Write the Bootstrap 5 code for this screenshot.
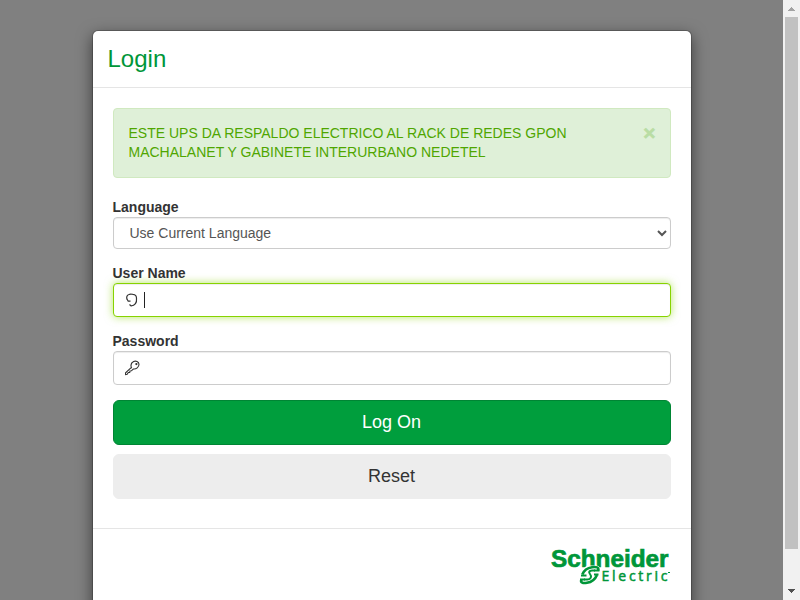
<!DOCTYPE html>
<html lang="en">
<head>
<meta charset="utf-8">
<meta name="viewport" content="width=device-width, initial-scale=1">
<title>Login</title>
<link href="https://cdn.jsdelivr.net/npm/bootstrap@5.3.0/dist/css/bootstrap.min.css" rel="stylesheet">
<style>
body{font-family:"Liberation Sans",Arial,sans-serif;font-size:14px;line-height:20px;color:#333;background:#808080}
.login-dialog{width:600px;height:650px;margin-top:30px;border:1px solid rgba(0,0,0,.2);border-radius:6px;box-shadow:0 5px 15px rgba(0,0,0,.5);background-clip:padding-box}
.login-head{height:57px;padding:11px 15px 0;border-bottom:1px solid #e5e5e5}
.login-head h1{font-size:24px;line-height:34px;color:#009639}
.login-body{padding:20px 20px 29px}
.notice{height:70px;padding:15px;margin-bottom:19px;color:#4fa600;background:#dff0d8;border:1px solid #d0e9c0;border-radius:4px;line-height:19px}
.notice p{width:460px}
.dismiss{width:14px;height:17px;margin-right:-2px;color:#b9dda4;-webkit-text-stroke:.6px #b9dda4;border:0;background:none;padding:0;font-size:21px;font-weight:700;line-height:16px}
.login-body label{font-weight:700;line-height:20px;height:20px}
.login-body .field{height:34px;font-size:14px;line-height:20px;padding:6px 12px;color:#555;border:1px solid #ccc;border-radius:4px;box-shadow:inset 0 1px 1px rgba(0,0,0,.075);background:#fff}
.login-body select.field{height:32px;appearance:auto;padding:5px 12px}
.login-body div.field{padding-left:11px}
.login-body .field.active-field{border-color:#87d300;box-shadow:inset 0 1px 1px rgba(0,0,0,.075),0 0 8px rgba(135,211,0,.6)}
.login-body .user-label,.login-body .pass-label{margin-top:14px}
.caret{width:1px;height:16px;background:#222;margin-left:5px}
.login-body .btn{height:45px;padding:0;font-size:18px;line-height:41px;border-radius:6px}
.login-body .btn-logon{margin-top:15px}
.login-body .btn-clear{margin-top:9px}
.btn-logon,.btn-logon:hover{color:#fff;background:#009e3d;border-color:#008534}
.btn-clear,.btn-clear:hover{color:#333;background:#ededed;border-color:#ededed}
.login-foot{border-top:1px solid #e5e5e5;padding:15px 20px}
.scroll-track{width:17px;background:#f1f1f1}
.scroll-thumb{width:13px;height:532px;background:#c1c1c1}
</style>
</head>
<body>
<div class="d-flex vh-100 overflow-hidden">
  <main class="flex-grow-1 d-flex justify-content-center align-items-start overflow-hidden">
    <section class="login-dialog bg-white flex-shrink-0">
      <header class="login-head"><h1 class="m-0 fw-normal">Login</h1></header>
      <form class="login-body">
        <div class="notice d-flex justify-content-between" role="alert">
          <p class="m-0">ESTE UPS DA RESPALDO ELECTRICO AL RACK DE REDES GPON MACHALANET Y GABINETE INTERURBANO NEDETEL</p>
          <button type="button" class="dismiss" aria-label="Close">×</button>
        </div>
        <label class="d-block" for="lang">Language</label>
        <select id="lang" class="form-control field"><option>Use Current Language</option></select>
        <label class="d-block user-label">User Name</label>
        <div class="form-control field active-field d-flex align-items-center" role="textbox">
          <svg width="14" height="16" viewBox="0 0 14 16" fill="none" stroke="#333" stroke-width="1.2"><path d="M2 7.500C1.200 5.200 2 2.800 4 2.500C5.500 1.600 7 2.300 8 2.400C10.500 2.400 11.600 4.400 11.500 6.500C12 10.500 10 13.800 6 14M2 7L3.200 9.200H5.500M4.500 12.500L6.500 14.200"/></svg>
          <span class="caret"></span>
        </div>
        <label class="d-block pass-label">Password</label>
        <div class="form-control field d-flex align-items-center" role="textbox">
          <svg width="15" height="16" viewBox="0.500 0 15 16" fill="none" stroke="#333" stroke-width="1.1"><path d="M7.2 8.2C6 5.7 6.7 2.900 9.100 1.600C11.200.5 14.400 1.700 14.500 4.200C14.600 7.300 11.600 9.400 8.800 9L6.900 10.800L5.500 10.900L5.200 12.400L3.800 12.500L2.700 14.200L1 14.500L1.100 12.800L7.200 7.200"/><circle cx="11.900" cy="4.100" r=".6"/></svg>
        </div>
        <button type="button" class="btn btn-logon w-100 d-block">Log On</button>
        <button type="button" class="btn btn-clear w-100 d-block">Reset</button>
      </form>
      <footer class="login-foot d-flex justify-content-end">
        <svg width="120" height="42" viewBox="0 0 120 42" fill="#009639" role="img" aria-label="Schneider Electric">
          <text x="0" y="23" font-family="Liberation Sans" font-size="23.5" font-weight="700" textLength="117.5" lengthAdjust="spacingAndGlyphs" stroke="#009639" stroke-width=".7">Schneider</text>
          <path d="M38 21.500H45C49 21.500 49.500 25 48 29L45.500 35C43.500 39 41 40.500 37 40.500H33C29 40.500 28 37 29.500 33L32 27C33.500 23 35 21.500 38 21.500Z" fill="#fff"/>
          <path d="M47 26.500C48.500 23 45 22.700 41 23.200C35 24 32.500 27.500 31.300 30.500M30.500 35.500C29 38.800 32 39.500 36 38.800C42 38 44.500 34.500 46 31" fill="none" stroke="#009639" stroke-width="2.600"/>
          <path d="M44 26.500H41C38 26.500 37.500 28 39 30C41 32.500 40 35.500 36.500 35.500H33" fill="none" stroke="#009639" stroke-width="2"/>
          <path d="M43 26.500H48.500M43 30.500H47.500M30 31.500H35.500M29 35.500H34" stroke="#009639" stroke-width="2"/>
          <text x="50.500" y="37" font-family="Open Sans" font-size="14" font-weight="500" textLength="66" stroke="#009639" stroke-width=".5">Electric</text>
          <path d="M117 28h2v1h-2z"/>
        </svg>
      </footer>
    </section>
  </main>
  <aside class="scroll-track d-flex flex-column align-items-center flex-shrink-0">
    <svg width="17" height="17" viewBox="0 0 17 17"><path d="M8 7h1v1h1v1h1v1h1v1H5v-1h1V9h1V8h1z" fill="#a3a3a3"/></svg>
    <div class="scroll-thumb"></div>
    <svg class="mt-auto" width="17" height="17" viewBox="0 0 17 17"><path d="M5 6h7v1h-1v1h-1v1H9v1H8V9H7V8H6V7H5z" fill="#505050"/></svg>
  </aside>
</div>
<script src="https://cdn.jsdelivr.net/npm/bootstrap@5.3.0/dist/js/bootstrap.bundle.min.js"></script>
</body>
</html>
